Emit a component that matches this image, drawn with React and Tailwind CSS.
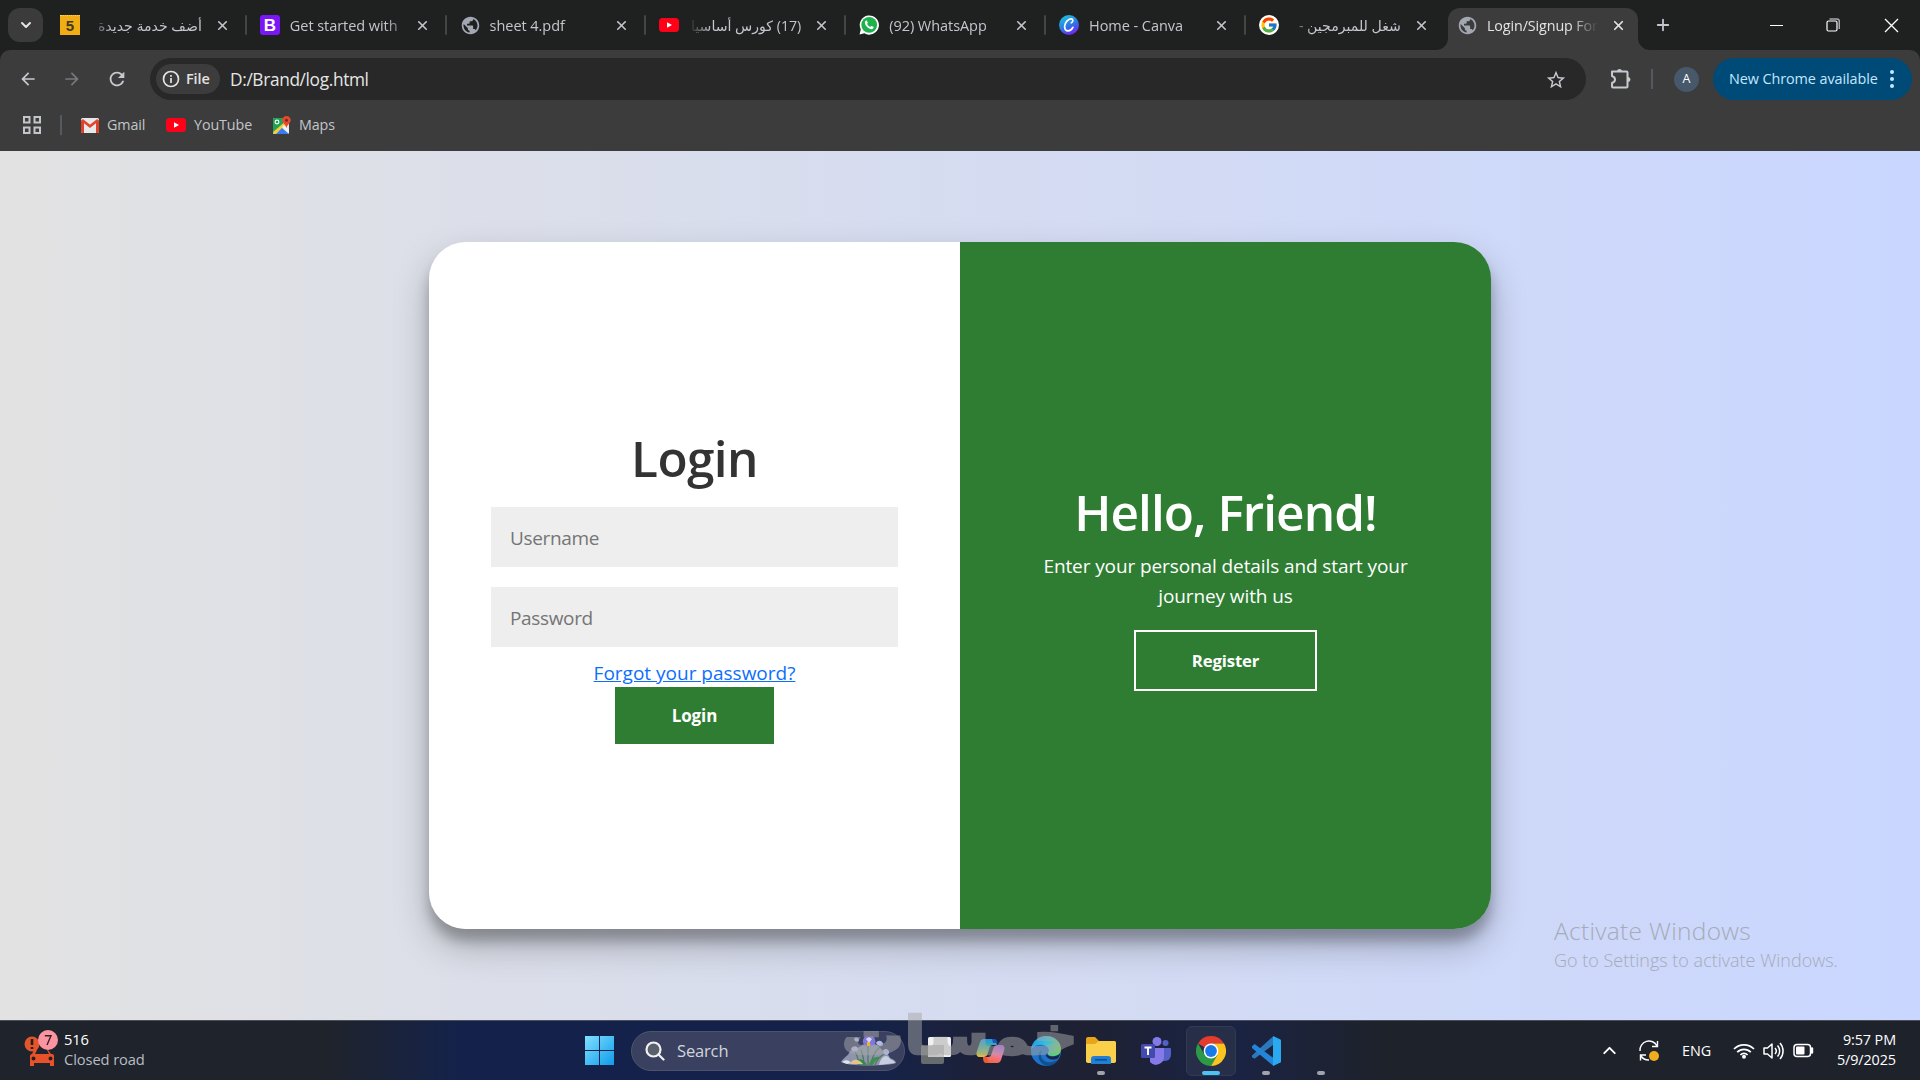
import { MdArrowBack, MdArrowForward, MdRefresh, MdStarBorder, MdPublic } from 'react-icons/md';
import { FcGoogle } from 'react-icons/fc';
import { ChevronDown, ChevronUp, X, Plus } from 'lucide-react';
import clsx from 'clsx';

const KhamsatIcon = () => (
  <div className="flex h-5 w-5 items-center justify-center border-t border-dotted border-[#ffd45a] bg-[#f0ad14] font-['Liberation_Sans'] text-[15px] font-bold leading-none text-[#40391f]">
    5
  </div>
);

const BootstrapIcon = () => (
  <div className="flex h-5 w-5 items-center justify-center rounded-[3px] bg-[#7b16f7] font-['Liberation_Sans'] text-[17px] font-bold leading-none text-white">
    B
  </div>
);

const GlobeIcon = () => <MdPublic size={21} className="text-[#a3a7b1]" />;

const YoutubeIcon = () => (
  <svg width="20" height="20" viewBox="0 0 20 20">
    <rect y="3" width="20" height="14" rx="3.5" fill="#ff0018" />
    <path d="M8 7.3l5 2.7-5 2.7z" fill="#fff" />
  </svg>
);

const WhatsappIcon = () => (
  <svg width="20" height="20" viewBox="0 0 20 20">
    <path d="M.5 19.5l1.3-5A9.6 9.6 0 1 1 5.400 18.300z" fill="#fff" />
    <circle cx="10.200" cy="9.800" r="7.900" fill="#1fb14c" />
    <path d="M6.200 6.300c.6-1.100 1.500-1 1.800-.4l.8 1.700c.2.500-.6 1-.6 1.300.6 1.300 1.600 2.300 3 2.900.4.100.9-1 1.300-.9l1.900.9c.4.300.2 1.400-.6 1.900-1.300.9-3.500.4-5.600-1.600C6.100 10.100 5.400 7.900 6.200 6.300z" fill="#fff" />
  </svg>
);

const CanvaIcon = () => (
  <svg width="20" height="20" viewBox="0 0 20 20">
    <defs>
      <linearGradient id="canva" x1="0.200" y1="0" x2="0.700" y2="1">
        <stop offset="0.100" stopColor="#20b7dd" />
        <stop offset="0.550" stopColor="#2c76e6" />
        <stop offset="1" stopColor="#7a1df0" />
      </linearGradient>
    </defs>
    <circle cx="10" cy="10" r="10" fill="url(#canva)" />
    <path d="M12.300 7.800c1.700-.6 2.300-3.600.2-3.900C9.200 3.500 5.700 7.700 5.600 11.600c0 2.900 1.500 4.300 3.500 4.200 2.100-.1 3.800-1.600 4.800-3.500" fill="none" stroke="#fff" strokeWidth="1.700" strokeLinecap="round" />
  </svg>
);

const GoogleIcon = () => (
  <div className="flex h-5 w-5 items-center justify-center rounded-full bg-white">
    <FcGoogle size={18} />
  </div>
);

const tabs = [
  { title: 'أضف خدمة جديدة', icon: KhamsatIcon, rtl: true },
  { title: 'Get started with', icon: BootstrapIcon },
  { title: 'sheet 4.pdf', icon: GlobeIcon },
  { title: '(17) كورس أساسيا', icon: YoutubeIcon, rtl: true },
  { title: '(92) WhatsApp', icon: WhatsappIcon },
  { title: 'Home - Canva', icon: CanvaIcon },
  { title: 'شغل للمبرمجين -', icon: GoogleIcon, rtl: true },
];

const Tab = ({ title, icon: Icon, rtl, last }) => (
  <div className="relative flex h-full w-[199.8px] shrink-0 items-center pl-[13px]">
    <div className="flex w-[21px] shrink-0 items-center">
      <Icon />
    </div>
    <div
      dir={rtl ? 'rtl' : 'ltr'}
      className={clsx(
        'mt-px ml-[9px] w-[112px] overflow-hidden whitespace-nowrap leading-5',
        rtl
          ? 'mask-l-from-80% mask-l-to-100% text-[14.1px]'
          : 'mask-r-from-85% mask-r-to-110% text-[14.5px] tracking-[-0.05px]'
      )}
    >
      {title}
    </div>
    <X size={15} strokeWidth={2.6} className="ml-[13px] shrink-0" />
    {!last && <div className="ml-[15px] h-5 w-[2px] rounded bg-[#444645]" />}
  </div>
);

const TabStrip = () => (
  <div className="flex h-[50px] items-center bg-[#1f2120] text-[#c3c6cd]">
    <div className="ml-2 flex h-[34px] w-[35px] shrink-0 items-center justify-center rounded-xl bg-[#3a3b3a]">
      <ChevronDown size={16} strokeWidth={3} className="text-[#e3e3e3]" />
    </div>
    <div className="ml-[4px] flex h-full">
      {tabs.map((tab, i) => (
        <Tab key={tab.title} {...tab} last={i === tabs.length - 1} />
      ))}
    </div>
    {/* Active tab */}
    <div className="relative ml-[2.4px] mt-2 flex h-[42px] w-[190px] shrink-0 items-center rounded-t-[12px] bg-[#3c3c3c] pb-2 pl-[9px] text-[#e3e3e3]">
      <svg className="absolute bottom-0 -left-3" width="12" height="12">
        <path d="M12 0v12H0A12 12 0 0 0 12 0z" fill="#3c3c3c" />
      </svg>
      <svg className="absolute -right-3 bottom-0" width="12" height="12">
        <path d="M0 0v12h12A12 12 0 0 1 0 0z" fill="#3c3c3c" />
      </svg>
      <GlobeIcon />
      <div className="mt-px ml-[9px] w-[111px] overflow-hidden whitespace-nowrap text-[14.3px] leading-5 tracking-[-0.1px] mask-r-from-75% mask-r-to-100%">
        Login/Signup For
      </div>
      <X size={15} strokeWidth={2.8} className="ml-[13px]" />
    </div>
    <Plus size={18} strokeWidth={2.4} className="ml-[16px]" />
    {/* Window controls */}
    <div className="ml-auto flex items-center pr-[21px] text-white">
      <div className="h-px w-[13px] bg-white" />
      <svg className="ml-[43px]" width="14" height="14" fill="none" stroke="currentColor" strokeWidth="1.200">
        <rect x="1" y="3" width="10" height="10" rx="1.500" />
        <path d="M3.500 1h7.500a2.300 2.300 0 0 1 2.300 2.300v7.700" stroke="#a8a8b0" strokeWidth="1.500" />
      </svg>
      <svg className="ml-[44px]" width="15" height="15" stroke="currentColor" strokeWidth="1.300">
        <path d="M1 1l13 13M14 1L1 14" />
      </svg>
    </div>
  </div>
);

const Toolbar = () => (
  <div className="flex h-[58px] items-center rounded-t-[10px] bg-[#3c3c3c] text-[#c7c9d0]">
    <MdArrowBack size={20} className="ml-[18px]" />
    <MdArrowForward size={20} className="ml-[24px] text-[#77787c]" />
    <MdRefresh size={22} className="ml-[24px]" />
    <div className="ml-[22px] flex h-[42px] w-[1436px] items-center rounded-full bg-[#282828] pr-[19px] pl-[6px]">
      <div className="flex h-[30px] w-[64px] items-center rounded-full bg-[#3c3c3c] pl-[6px] text-[#e3e3e3]">
        <svg width="18" height="18" viewBox="0 0 18 18" fill="none" stroke="currentColor" strokeWidth="1.700">
          <circle cx="9" cy="9" r="7.500" />
          <path d="M9 8v5M9 5v1.700" />
        </svg>
        <span className="ml-[6px] text-[14.5px] font-semibold tracking-[-0.1px]">File</span>
      </div>
      <span className="mt-[2px] ml-[10px] text-[17.3px] tracking-[-0.35px] text-[#e6e6e6]">D:/Brand/log.html</span>
      <MdStarBorder size={22} className="mt-px ml-auto" />
    </div>
    <svg className="ml-[24px]" width="22" height="22" viewBox="0 0 22 22" fill="none" stroke="currentColor" strokeWidth="2">
      <path d="M2 3.500h14.500a1 1 0 0 1 1 1v14a1 1 0 0 1-1 1H3a1 1 0 0 1-1-1V15c4-1.500 4-5.500 0-7z" strokeLinejoin="round" />
      <path d="M7 3.500a2.500 2.500 0 0 1 5 0zM18 9a2.500 2.500 0 0 1 0 5z" fill="currentColor" stroke="none" />
    </svg>
    <div className="ml-[19px] h-5 w-[2px] bg-[#555a62]" />
    <div className="ml-[21px] flex h-[25px] w-[25px] items-center justify-center rounded-full bg-[#46586a] text-[12.5px] text-white">A</div>
    <div className="ml-[14px] flex h-[42px] w-[199px] items-center rounded-full bg-[#004a77] pl-[16px] text-[14.4px] tracking-[-0.08px] text-[#c2e7ff]">
      <span className="w-[150px] whitespace-nowrap">New Chrome available</span>
      <svg className="ml-[10px]" width="6" height="20" fill="currentColor">
        <circle cx="3" cy="3" r="2" />
        <circle cx="3" cy="10" r="2" />
        <circle cx="3" cy="17" r="2" />
      </svg>
    </div>
  </div>
);

const Bookmarks = () => (
  <div className="flex h-[43px] items-center bg-[#3c3c3c] pb-[9px] text-[14.3px] tracking-[-0.1px] text-[#c3c5cb]">
    <svg className="ml-[23px]" width="18" height="18" fill="none" stroke="currentColor" strokeWidth="2">
      <path d="M1 1h5.500v5.500H1zM11.500 1H17v5.500h-5.500zM1 11.500h5.500V17H1zM11.500 11.500H17V17h-5.500z" />
    </svg>
    <div className="ml-[19px] h-5 w-[2px] bg-[#555a62]" />
    <svg className="ml-[19px]" width="18" height="16" viewBox="0 0 18 16">
      <rect x="0" y="1" width="18" height="15" rx="1.500" fill="#e8e8ea" />
      <path d="M0 3v11.500A1.500 1.500 0 0 0 1.500 16H3V5zM18 3v11.500a1.500 1.500 0 0 1-1.500 1.500H15V5z" fill="#d9432c" />
      <path d="M1 3l8 6.300L17 3" fill="none" stroke="#e0452e" strokeWidth="2.600" />
    </svg>
    <span className="-mt-px ml-[8px] w-[39px]">Gmail</span>
    <span className="ml-[20px]"><YoutubeIcon /></span>
    <span className="-mt-px ml-[8px] w-[57px]">YouTube</span>
    <svg className="ml-[22px]" width="18" height="19" viewBox="0 0 18 19">
      <rect y="2" width="16" height="16" rx="1" fill="#e2e6ec" />
      <path d="M0 3a1 1 0 0 1 1-1h10L11 8 1 17 0 17z" fill="#1ea354" />
      <path d="M0 16L13 5l3 3L3 18H1z" fill="#f7cc3c" />
      <path d="M3 18l6-6 7 6z" fill="#3a7cf0" />
      <path d="M9 11l2-2 5 5v3z" fill="#f1f1f4" />
      <circle cx="4" cy="6" r="1.900" fill="none" stroke="#fff" strokeWidth="1.100" />
      <path d="M13.500 0a4.300 4.300 0 0 1 4.300 4.300c0 2.700-3.500 4-4.300 7.700-.8-3.700-4.300-5-4.300-7.700A4.300 4.300 0 0 1 13.500 0z" fill="#e5492f" />
      <circle cx="13.500" cy="4.300" r="1.500" fill="#85201a" />
    </svg>
    <span className="-mt-px ml-[8px]">Maps</span>
  </div>
);

const LoginForm = () => (
  <div className="flex w-1/2 flex-col items-center justify-center bg-white px-[62px] text-[19px]">
    <h1 className="mb-[9px] pt-px text-[49.5px] leading-[60px] font-semibold tracking-[-0.6px] text-[#333]">Login</h1>
    <input
      placeholder="Username"
      className="my-[10px] h-[60px] w-full bg-[#eee] px-[19px] pt-[2px] tracking-[-0.35px] placeholder:text-[#757575]"
    />
    <input
      type="password"
      placeholder="Password"
      className="my-[10px] h-[60px] w-full bg-[#eee] px-[19px] pt-[2px] tracking-[-0.35px] placeholder:text-[#757575]"
    />
    <a href="#" className="pt-[2px] leading-[28px] text-[#0d6efd] underline">Forgot your password?</a>
    <button className="h-[57px] w-[159px] bg-[#2e7d32] pt-px text-[17px] font-bold tracking-[-0.1px] text-white">Login</button>
  </div>
);

const WelcomePanel = () => (
  <div className="flex w-1/2 flex-col items-center justify-center bg-[#2e7d32] px-[50px] text-center text-white">
    <h1 className="mb-[8px] pt-[2px] text-[49.5px] leading-[60px] font-semibold tracking-[-0.95px]">Hello, Friend!</h1>
    <p className="mb-[19px] w-[380px] pt-px text-[19px] leading-[30px] tracking-[-0.1px]">
      Enter your personal details and start your journey with us
    </p>
    <button className="h-[61px] w-[183px] border-2 border-white pt-px text-[16.8px] font-bold tracking-[-0.15px]">Register</button>
  </div>
);

const StartIcon = () => (
  <svg width="29" height="29" viewBox="0 0 29 29">
    <defs>
      <linearGradient id="start" x1="0" y1="0" x2="1" y2="1">
        <stop offset="0" stopColor="#7fe0ff" />
        <stop offset="1" stopColor="#0f9cea" />
      </linearGradient>
    </defs>
    <path d="M0 0h14v14H0zM15 0h14v14H15zM0 15h14v14H0zM15 15h14v14H15z" fill="url(#start)" />
  </svg>
);

const Flowers = () => (
  <svg width="56" height="32" viewBox="0 0 56 32">
    <path d="M0 27c3-5 7-6 8-9 2-5 8-4 12-7 4-4 16-4 20 3 4 4 8 5 9 9 3 1 6 3 6 5-6 3-48 4-55-1z" fill="#aab0c8" opacity=".75" />
    <path d="M18 30c-1-8-3-13-6-16M27 30V8M30 30c1-8 4-14 9-18M23 30c0-8-2-12-3-15M34 30c2-5 4-8 9-11" fill="none" stroke="#547a55" strokeWidth="1.300" />
    <path d="M14 29c3-7 8-6 12 1z" fill="#2f8a4b" />
    <path d="M28 30c1-6 6-9 11-8-3 3-5 4-7 8z" fill="#3f8f55" />
    <path d="M9 29c2-5 8-6 13 0z" fill="#e2c48a" />
    <path d="M38 30c2-9 8-12 11-6 3 1 5 3 5 4z" fill="#c9cfe2" />
    <path d="M1 27c4-3 7-2 9 1l-4 1z" fill="#dfe3ee" />
    <path d="M22 5c1-4 4-4 6-3 3-2 6 0 6 3 2 4-2 6-5 4-3 3-8 1-7-4z" fill="#8076e0" />
    <path d="M25 4l3 4 3-4-3-2z" fill="#dcd7ff" />
    <path d="M26 7h3v4h-3z" fill="#e8b72b" />
    <path d="M10 14c2-4 7-3 7 0s-5 4-7 0zM35 8c2-4 7-2 7 1s-5 3-7-1zM42 16c2-4 7-1 6 2s-6 2-6-2zM13 4c2-3 5-1 5 1s-4 3-5-1z" fill="#b3b9ee" />
  </svg>
);

const TaskViewIcon = () => (
  <svg width="30" height="28" viewBox="0 0 30 28">
    <rect y="8" width="23" height="19" rx="2" fill="#686b6e" />
    <rect x="7" y="0" width="23" height="20" rx="1.500" fill="#f1f1f1" />
    <path d="M7 8h16v12H8.500A1.500 1.500 0 0 1 7 18.500z" fill="#c6c6c8" />
  </svg>
);

const CopilotIcon = () => (
  <svg width="29" height="26" viewBox="0 0 29 26">
    <defs>
      <linearGradient id="copA" x1="0.400" y1="0" x2="0.400" y2="1">
        <stop offset="0" stopColor="#2293ec" />
        <stop offset="0.500" stopColor="#4bb98a" />
        <stop offset="1" stopColor="#f2bd2c" />
      </linearGradient>
      <linearGradient id="copB" x1="0.600" y1="0" x2="0.300" y2="1">
        <stop offset="0" stopColor="#a45ce8" />
        <stop offset="0.500" stopColor="#f07aa0" />
        <stop offset="1" stopColor="#f2673a" />
      </linearGradient>
    </defs>
    <path d="M8 1h9c2 0 2.500 1.500 3 3l1 3h-4c-2 0-3 1-3.500 3l-2 6c-.6 2-2 3-4 3H4C1 19 0 17 .7 14L4 4c.7-2 2-3 4-3z" fill="url(#copA)" />
    <path d="M16 1h2c2 0 3 1.500 3.500 4H17z" fill="#1856c8" />
    <path d="M21 25h-9c-2 0-2.500-1.500-3-3l-1-3h4c2 0 3-1 3.500-3l2-6c.6-2 2-3 4-3H25c3 0 4 2 3.300 5L25 22c-.7 2-2 3-4 3z" fill="url(#copB)" />
    <path d="M13 25h-3c-2 0-3-2-3-6h4z" fill="#ef5a35" />
  </svg>
);

const EdgeIcon = () => (
  <svg width="30" height="30" viewBox="0 0 30 30">
    <defs>
      <linearGradient id="edge" x1="0" y1="0.200" x2="1" y2="0.500">
        <stop offset="0" stopColor="#1e9be0" />
        <stop offset="0.500" stopColor="#35bfe0" />
        <stop offset="1" stopColor="#68d25e" />
      </linearGradient>
    </defs>
    <circle cx="15" cy="15" r="15" fill="#1c72cc" />
    <path d="M11 14c-4 8 3 15 13 11 2-.7 3-1.500 4-2a15 15 0 0 1-12 7C7 28 5 17 11 14z" fill="#12508f" />
    <path d="M0 14C1 5 8 0 15 0c9 0 15 6 15 13 0 5-4 7-8 7-4 0-6-1.500-5-3 2-2 1-7-5-8C7 8 2 10 0 14z" fill="url(#edge)" />
    <path d="M17 17c-1.500 2 1 3.500 5 3.500 2.500 0 5-.7 7-3-.3 1.600-.7 3-1.700 4.500-3 2.500-9 2-11.500-1-1.400-1.800-.7-4 1.200-4z" fill="#1b2744" />
  </svg>
);

const FolderIcon = () => (
  <svg width="30" height="27" viewBox="0 0 30 27">
    <path d="M0 2a2 2 0 0 1 2-2h7l4 4h15a2 2 0 0 1 2 2v19H0z" fill="#e7a51c" />
    <path d="M0 7h9l4-3h15a2 2 0 0 1 2 2v18a2 2 0 0 1-2 2H2a2 2 0 0 1-2-2z" fill="#fad04a" />
    <path d="M5 27v-5a3 3 0 0 1 3-3h14a3 3 0 0 1 3 3v5z" fill="#2080d8" />
    <path d="M9 22.800h12" stroke="#14518f" strokeWidth="1.800" />
  </svg>
);

const TeamsIcon = () => (
  <svg width="30" height="28" viewBox="0 0 30 28">
    <circle cx="24.500" cy="6" r="3" fill="#5360c8" />
    <path d="M20 11h9a1 1 0 0 1 1 1v6a6 6 0 0 1-6 6h-3z" fill="#5360c8" />
    <circle cx="16" cy="4.500" r="4.500" fill="#8479e6" />
    <path d="M9 11h14v8a8 8 0 0 1-14 6z" fill="#8479e6" />
    <rect x="0" y="7" width="14" height="14" rx="1.500" fill="#434aae" />
    <path d="M3.500 10.500h7M7 10.500V18" stroke="#fff" strokeWidth="1.900" />
  </svg>
);

const ChromeIcon = () => (
  <svg width="30" height="30" viewBox="0 0 30 30">
    <path d="M15 15L2 7.500A15 15 0 0 1 28 7.500H15z" fill="#e33b2e" />
    <path d="M15 15L8.500 18.700 2 7.500A15 15 0 0 0 15 30l6.500-11.200z" fill="#2a9a48" />
    <path d="M15 7.500h13A15 15 0 0 1 15 30l6.500-11.300z" fill="#fac31f" />
    <circle cx="15" cy="15" r="7.400" fill="#fff" />
    <circle cx="15" cy="15" r="5.900" fill="#1a78e8" />
  </svg>
);

const VscodeIcon = () => (
  <svg width="30" height="30" viewBox="0 0 30 30">
    <path d="M1 19.500L22.500 0v8.500L3.500 22.800 1 21.200z" fill="#2b78bd" />
    <path d="M1 10.300l2.600-2.200 19 14V30L1 12z" fill="#2385d8" />
    <path d="M22 0l7 3.200a1.500 1.500 0 0 1 1 1.400v20.800a1.500 1.500 0 0 1-1 1.400L22 30z" fill="#2aa8f0" />
  </svg>
);

const apps = [
  { name: 'taskview', icon: TaskViewIcon },
  { name: 'copilot', icon: CopilotIcon },
  { name: 'edge', icon: EdgeIcon },
  { name: 'explorer', icon: FolderIcon, running: true },
  { name: 'teams', icon: TeamsIcon },
  { name: 'chrome', icon: ChromeIcon, active: true },
  { name: 'vscode', icon: VscodeIcon, running: true },
  { name: 'blank', running: true },
];

const Taskbar = () => (
  <div className="relative flex h-[60px] items-center border-t border-[#4b5058] bg-[linear-gradient(to_right,#1f232b_17%,#14224b_24%,#14224b_45%,#1c2138_51%,#1e2133_57%,#1a2344_64%,#1e222b_72%)] text-white">
    <div className="flex w-[572px] items-center pb-[3px] pl-[24px]">
      <svg width="36" height="38" viewBox="0 0 36 38">
        <circle cx="8" cy="14" r="7.500" fill="#e2562a" />
        <path d="M8 9v6M8 17v2" stroke="#24201f" strokeWidth="2.600" />
        <path d="M10 20h14l3 4h1a2 2 0 0 1 2 2v10h-4v-3H10v3H6V26a2 2 0 0 1 2-2z" fill="#e8522a" />
        <circle cx="9.500" cy="28.500" r="2" fill="#24201f" />
        <circle cx="26.500" cy="28.500" r="2" fill="#24201f" />
        <path d="M11 24l2-4h10l2 4z" fill="#20242c" />
        <circle cx="24" cy="10" r="10" fill="#fb94a0" />
        <path d="M20.800 5.800h6.200L23 15" fill="none" stroke="#3a2026" strokeWidth="1.400" />
      </svg>
      <div className="ml-[4px] text-[14.7px] leading-5 tracking-[-0.1px]">
        <p>516</p>
        <p className="text-[#b9bcc4]">Closed road</p>
      </div>
    </div>
    <div className="flex w-[55px] justify-center"><StartIcon /></div>
    <div className="ml-[4px] flex h-10 w-[274px] items-center rounded-full border border-[#4d546a] bg-[#3a4160] pr-[7px] pl-[13px]">
      <svg width="20" height="20" viewBox="0 0 20 20" fill="none" stroke="#f1f1f1" strokeWidth="2.200">
        <circle cx="8.500" cy="8.500" r="7" fill="#59606e" />
        <path d="M13.500 13.500l5 5" strokeLinecap="round" />
      </svg>
      <span className="mt-px ml-[12px] text-[16.5px] tracking-[-0.15px] text-[#d3d5dc]">Search</span>
      <span className="ml-auto"><Flowers /></span>
    </div>
    <div className="ml-[3px] flex">
      {apps.map(({ name, icon: Icon, running, active }) => (
        <div key={name} className="flex h-[58px] w-[55px] items-center justify-center">
          <div
            className={clsx(
              'relative flex h-[50px] w-[50px] items-center justify-center rounded-md',
              active && 'border border-[#333b54] bg-[#272e48]'
            )}
          >
            {Icon && <Icon />}
            {active && <div className="absolute bottom-0 h-1 w-[18px] rounded-full bg-[#4cc2f5]" />}
            {running && <div className="absolute bottom-px h-1 w-2 rounded-full bg-[#a0a2ac]" />}
          </div>
        </div>
      ))}
    </div>
    {/* System tray */}
    <div className="ml-auto flex items-center pr-[24px] text-[14.4px] tracking-[-0.1px]">
      <ChevronUp size={21} strokeWidth={2.2} />
      <svg className="ml-[17px]" width="24" height="24" viewBox="0 0 24 24" fill="none" stroke="#fff" strokeWidth="1.400">
        <path d="M3 12A9 9 0 0 1 20 7M20.500 2v5.500H15M3.500 21.500V16H9M4 17a9 9 0 0 0 8 4" />
        <circle cx="17" cy="17" r="5" fill="#f0ad1e" stroke="none" />
      </svg>
      <span className="ml-[21px] w-[31px]">ENG</span>
      <svg className="ml-[20px]" width="22" height="18" viewBox="0 0 22 18" fill="none" stroke="#fff" strokeWidth="1.700">
        <path d="M1 7a14 14 0 0 1 20 0M4.200 10.200a9.500 9.500 0 0 1 13.600 0M7.400 13a5 5 0 0 1 7.200 0" />
        <circle cx="11" cy="14.800" r="2" fill="#fff" stroke="none" />
      </svg>
      <svg className="ml-[8px]" width="22" height="18" viewBox="0 0 22 18" fill="none" stroke="#fff" strokeWidth="1.500">
        <path d="M1 6h3.500L9 2v14l-4.500-4H1zM12 6a4.500 4.500 0 0 1 0 6M14.500 3.500a8 8 0 0 1 0 11M17 1a12 12 0 0 1 0 16" strokeLinejoin="round" />
      </svg>
      <svg className="ml-[8px]" width="21" height="15" viewBox="0 0 21 15" fill="none" stroke="#fff" strokeWidth="1.500">
        <rect x="1" y="1.500" width="16.500" height="12" rx="3" />
        <rect x="3" y="3.500" width="8.500" height="8" rx="1" fill="#fff" stroke="none" />
        <path d="M19 5.500v4" strokeWidth="2.400" strokeLinecap="round" />
      </svg>
      <div className="ml-[21px] w-[61px] pb-[2px] text-right leading-5 whitespace-nowrap">
        <p>9:57 PM</p>
        <p>5/9/2025</p>
      </div>
    </div>
    {/* Logo overlay */}
    <div
      dir="rtl"
      className="absolute -top-[25px] left-[847px] w-[231px] origin-top-right scale-x-[1.2] text-right font-['DejaVu_Sans'] text-[52px] leading-[80px] font-bold text-[#a8a8a8] opacity-50 [-webkit-text-stroke:2.5px_#a8a8a8]"
    >
      خمسات
    </div>
  </div>
);

export default function App() {
  return (
    <div className="flex h-[1080px] w-[1920px] flex-col overflow-hidden bg-[#1f2120] font-['Open_Sans','DejaVu_Sans',sans-serif]">
      <TabStrip />
      <Toolbar />
      <Bookmarks />
      <main className="relative flex flex-1 items-center justify-center bg-linear-to-r/srgb from-[#e2e2e2] to-[#c9d6ff]">
        <div className="flex h-[687px] w-[1062px] rounded-[37px] shadow-[0_17px_35px_rgba(0,0,0,0.25),0_12px_12px_rgba(0,0,0,0.22)]">
          <div className="flex w-full overflow-hidden rounded-[37px]">
            <LoginForm />
            <WelcomePanel />
          </div>
        </div>
        <div className="absolute top-[762px] left-[1554px] whitespace-nowrap text-[#a6abb6]">
          <p className="text-[24.5px] leading-[36px] font-light tracking-[0.3px]">Activate Windows</p>
          <p className="-mt-px text-[18px] leading-[24px] font-light">Go to Settings to activate Windows.</p>
        </div>
      </main>
      <Taskbar />
    </div>
  );
}
